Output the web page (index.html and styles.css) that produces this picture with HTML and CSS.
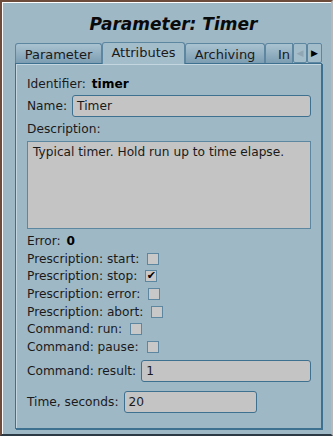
FILE: index.html
```html
<!DOCTYPE html>
<html lang="en">
<head>
    <meta charset="UTF-8">
    <meta name="viewport" content="width=device-width, initial-scale=1.0">
    <title>Parameter: Timer</title>
    <link rel="stylesheet" href="styles.css">
</head>
<body>
    <div class="window">
        <h1 class="title">Parameter: Timer</h1>

        <div class="tabs">
            <div class="tab tab-param">Parameter</div>
            <div class="tab tab-active">Attributes</div>
            <div class="tab tab-arch">Archiving</div>
            <div class="tab tab-cut">In</div>
            <div class="tab-arrows">
                <span class="arrow arrow-off">&#9664;</span>
                <span class="arrow">&#9654;</span>
            </div>
        </div>

        <div class="panel">
            <div class="row"><span>Identifier:</span><b>timer</b></div>
            <div class="row field-row">
                <label>Name:</label>
                <div class="field">Timer</div>
            </div>
            <div class="row">Description:</div>
            <div class="textarea">Typical timer. Hold run up to time elapse.</div>
            <div class="row"><span>Error:</span><b>0</b></div>
            <div class="checks">
                <div class="row check-row"><span>Prescription: start:</span><span class="check"></span></div>
                <div class="row check-row"><span>Prescription: stop:</span><span class="check">&#10004;</span></div>
                <div class="row check-row"><span>Prescription: error:</span><span class="check"></span></div>
                <div class="row check-row"><span>Prescription: abort:</span><span class="check"></span></div>
                <div class="row check-row"><span>Command: run:</span><span class="check"></span></div>
                <div class="row check-row"><span>Command: pause:</span><span class="check"></span></div>
            </div>
            <div class="row field-row">
                <label>Command: result:</label>
                <div class="field">1</div>
            </div>
            <div class="row field-row">
                <label>Time, seconds:</label>
                <div class="field field-short">20</div>
            </div>
        </div>
    </div>
</body>
</html>
```

FILE: styles.css
```css
html, body {
    margin: 0;
    padding: 0;
    background-color: #9fb8c6;
}
body {
    font-family: 'DejaVu Sans', sans-serif;
    font-size: 12.2px;
    color: #1a1a1a;
}
.window {
    box-sizing: border-box;
    width: 333px;
    height: 436px;
    border-top: 2px solid #6e4c3c;
    border-left: 2px solid #6e4c3c;
    border-right: 2px solid #b9b9b9;
    border-bottom: 2px solid #2b3a44;
    box-shadow: inset 1px 1px 0 #ffffff;
    background-color: #9fb8c6;
    padding: 0 9px 0 13px;
}
.title {
    margin: 0;
    height: 41px;
    padding-left: 10px;
    line-height: 44px;
    text-align: center;
    font-size: 17px;
    font-style: italic;
    font-weight: bold;
    color: #0a0a0a;
}
.tabs {
    display: flex;
    align-items: flex-end;
    height: 20px;
}
.tab {
    flex: none;
    box-sizing: border-box;
    height: 20px;
    line-height: 21px;
    font-size: 13px;
    text-align: center;
    border: 1px solid #5d86a0;
    border-bottom: none;
    border-radius: 3px 3px 0 0;
    background: linear-gradient(#aac3d1, #7c9db2);
    white-space: nowrap;
    overflow: hidden;
}
.tab-param {
    width: 87px;
}
.tab-active {
    width: 83px;
    height: 22px;
    line-height: 20px;
    margin-bottom: -1px;
    background: #a4bdcb;
}
.tab-arch {
    width: 80px;
}
.tab-cut {
    width: 28px;
    padding-left: 12px;
    text-align: left;
    border-radius: 3px 0 0 0;
}
.tab-arrows {
    display: flex;
    height: 20px;
}
.arrow {
    box-sizing: border-box;
    width: 15px;
    height: 20px;
    border: 1px solid #5d86a0;
    border-radius: 2px;
    background: #a4bdcb;
    font-size: 9px;
    line-height: 18px;
    text-align: center;
    color: #000;
}
.arrow-off {
    width: 14px;
    color: #8fa7b5;
}
.panel {
    box-sizing: border-box;
    height: 366px;
    border: 1px solid #3e7090;
    box-shadow: inset 1px 1px 0 #c4d6e0, 1px 1px 0 #3e7090;
    padding: 11px 10px 0 11px;
    display: flex;
    flex-direction: column;
}
.row {
    display: flex;
    align-items: center;
    gap: 6px;
    height: 17px;
}
.row b {
    color: #000;
}
.field-row {
    height: 22px;
    margin-top: 3px;
    margin-bottom: 3px;
    gap: 5px;
}
.field {
    flex: 1;
    box-sizing: border-box;
    height: 22px;
    line-height: 20px;
    padding: 0 4px;
    background-color: #c4c4c4;
    border: 1px solid #3e7090;
    border-radius: 3px;
}
.field-short {
    flex: none;
    width: 133px;
}
.textarea {
    box-sizing: border-box;
    height: 88px;
    margin: 4px 0 3px;
    padding: 3px 5px;
    background-color: #c4c4c4;
    border: 1px solid #5d86a0;
}
.checks {
    display: flex;
    flex-direction: column;
    margin-top: 1px;
    margin-bottom: 1px;
}
.check-row {
    height: 17.6px;
    gap: 8px;
}
.check {
    box-sizing: border-box;
    width: 12px;
    height: 12px;
    background-color: #c8c8c8;
    border: 1px solid #5d86a0;
    font-size: 11px;
    line-height: 10px;
    text-align: center;
    color: #000;
}
.field-row + .field-row {
    margin-top: 6px;
}
```
